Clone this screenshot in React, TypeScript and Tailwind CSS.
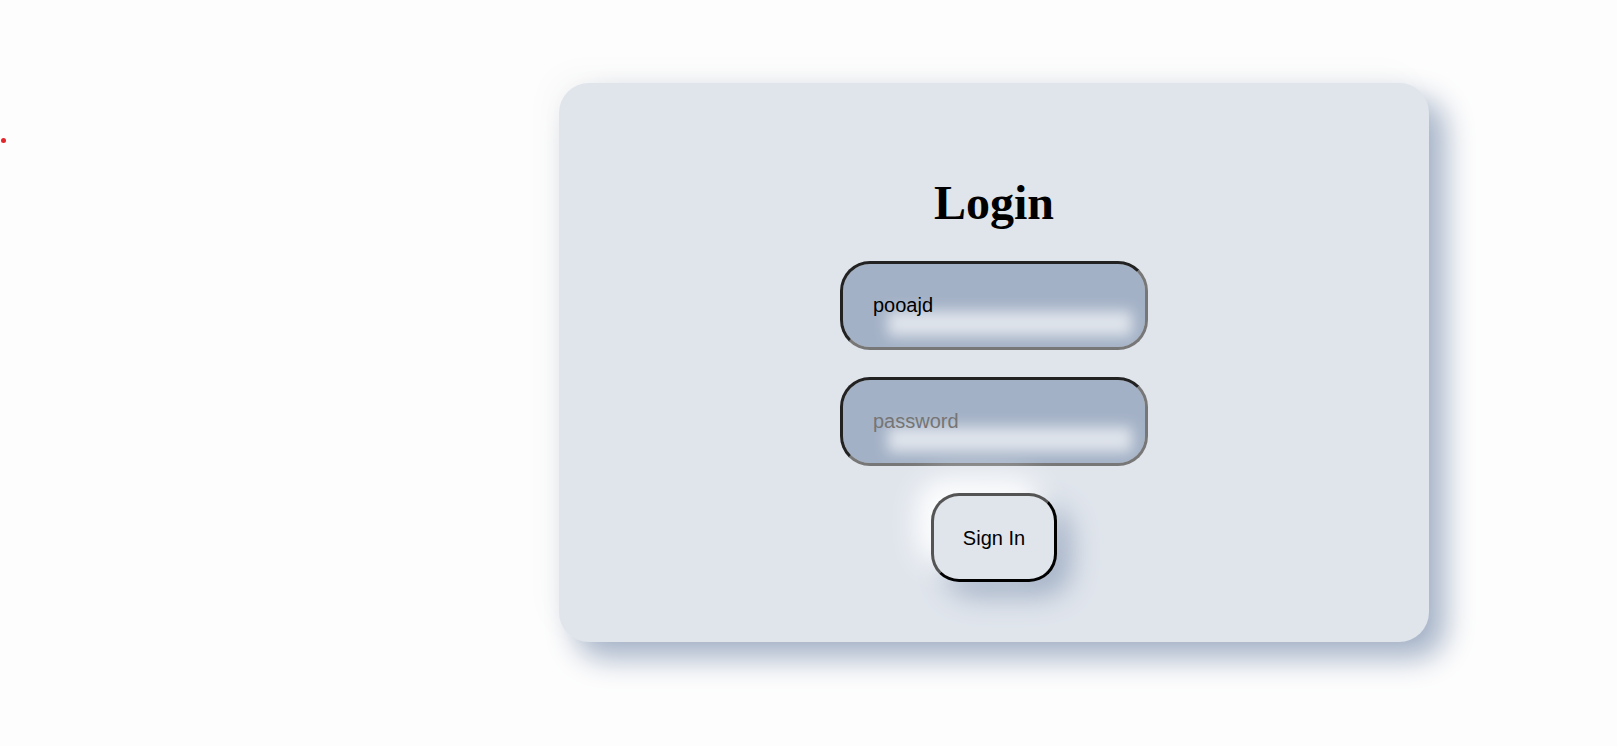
import React from "react";

export default function App() {
  return (
    <div className="w-full min-h-[746px] bg-[#fdfdfd] flex items-start [font-family:'Liberation_Sans',Arial,sans-serif]">
      <div className="mt-[138px] ml-[1px] w-[5px] h-[5px] rounded-full bg-[#e3262b] shrink-0" />
      <div className="ml-[553px] mt-[83px] w-[870px] h-[559px] shrink-0 rounded-[30px] bg-[#e0e5ec] shadow-[16px_16px_30px_#a3b1c6,-12px_-12px_30px_rgba(0,0,0,0.025)] flex flex-col items-center pt-[96px]">
        <h1 className="text-[48px] leading-[48px] font-bold text-black [font-family:'Liberation_Serif','Times_New_Roman',serif]">
          Login
        </h1>
        <input
          type="text"
          defaultValue="pooajd"
          className="mt-[34px] w-[308px] h-[89px] px-[30px] rounded-[30px] border-[3px] [border-style:inset] border-[#777777] bg-[#e0e5ec] shadow-[inset_16px_18px_14px_29px_#a3b1c6] text-[20px] text-black outline-none placeholder:text-[#757575]"
        />
        <input
          type="password"
          placeholder="password"
          className="mt-[27px] w-[308px] h-[89px] px-[30px] rounded-[30px] border-[3px] [border-style:inset] border-[#777777] bg-[#e0e5ec] shadow-[inset_16px_18px_14px_29px_#a3b1c6] text-[20px] text-black outline-none placeholder:text-[#757575]"
        />
        <button
          type="button"
          className="mt-[27px] w-[126px] h-[89px] rounded-[28px] border-[3px] [border-style:outset] border-black bg-[#e0e5ec] shadow-[-14px_-14px_28px_#ffffff,14px_14px_28px_#a3b1c6] text-[20px] text-black"
        >
          Sign In
        </button>
      </div>
    </div>
  );
}
